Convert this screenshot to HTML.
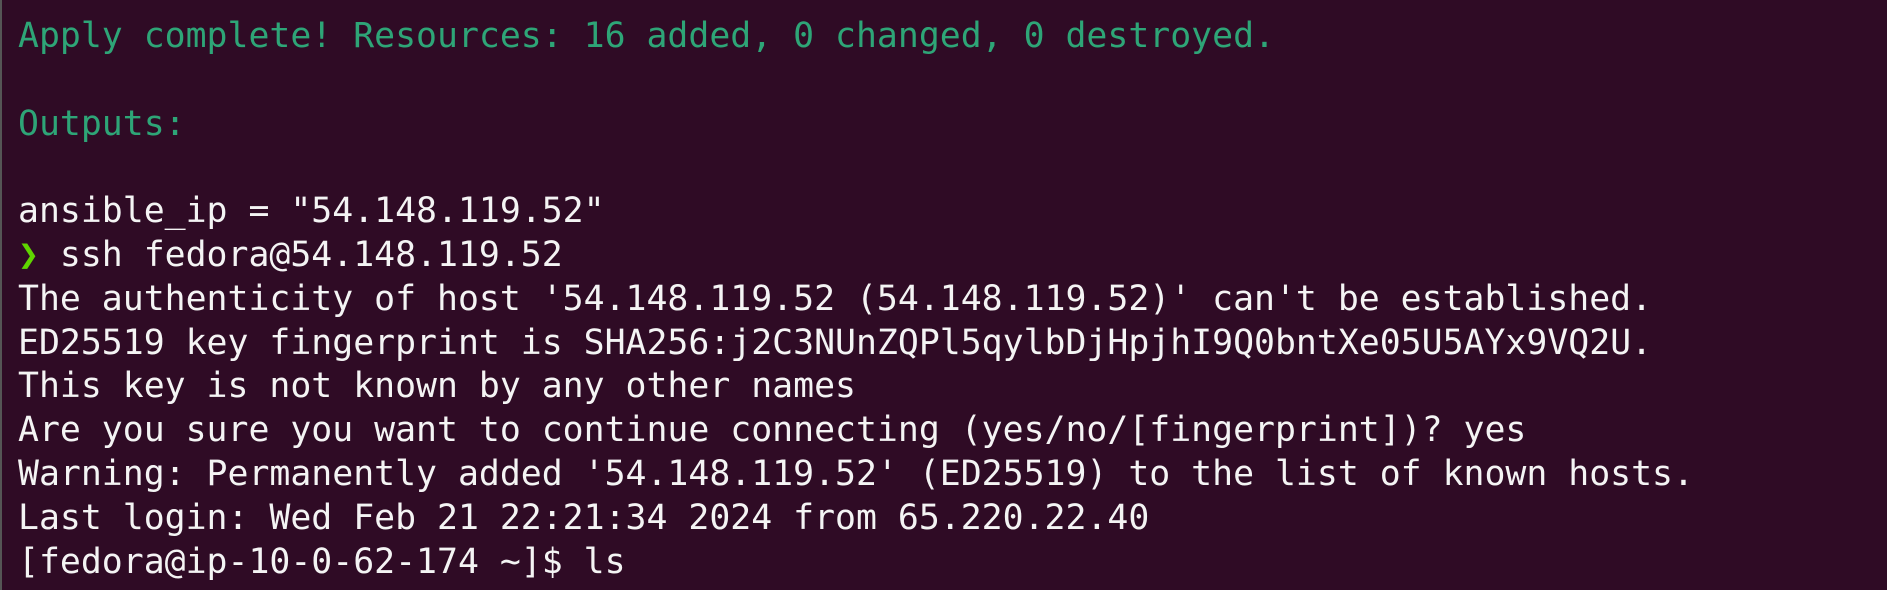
<!DOCTYPE html>
<html><head><meta charset="utf-8"><style>
html,body{margin:0;padding:0}
body{width:1887px;height:590px;background:#2f0b25;overflow:hidden;position:relative;border-left:2px solid #555;box-sizing:border-box}
pre{margin:0;position:absolute;left:16px;top:15px;font-family:"DejaVu Sans Mono","Liberation Mono",monospace;font-size:34.8px;line-height:43.8px;color:#f4f4f4;white-space:pre}
.g{color:#2ea577}.p{color:#5fd500}
</style></head><body>
<pre><span class="g">Apply complete! Resources: 16 added, 0 changed, 0 destroyed.</span>

<span class="g">Outputs:</span>

ansible_ip = "54.148.119.52"
<span class="p">❯</span> ssh fedora@54.148.119.52
The authenticity of host '54.148.119.52 (54.148.119.52)' can't be established.
ED25519 key fingerprint is SHA256:j2C3NUnZQPl5qylbDjHpjhI9Q0bntXe05U5AYx9VQ2U.
This key is not known by any other names
Are you sure you want to continue connecting (yes/no/[fingerprint])? yes
Warning: Permanently added '54.148.119.52' (ED25519) to the list of known hosts.
Last login: Wed Feb 21 22:21:34 2024 from 65.220.22.40
[fedora@ip-10-0-62-174 ~]$ ls</pre>
</body></html>
